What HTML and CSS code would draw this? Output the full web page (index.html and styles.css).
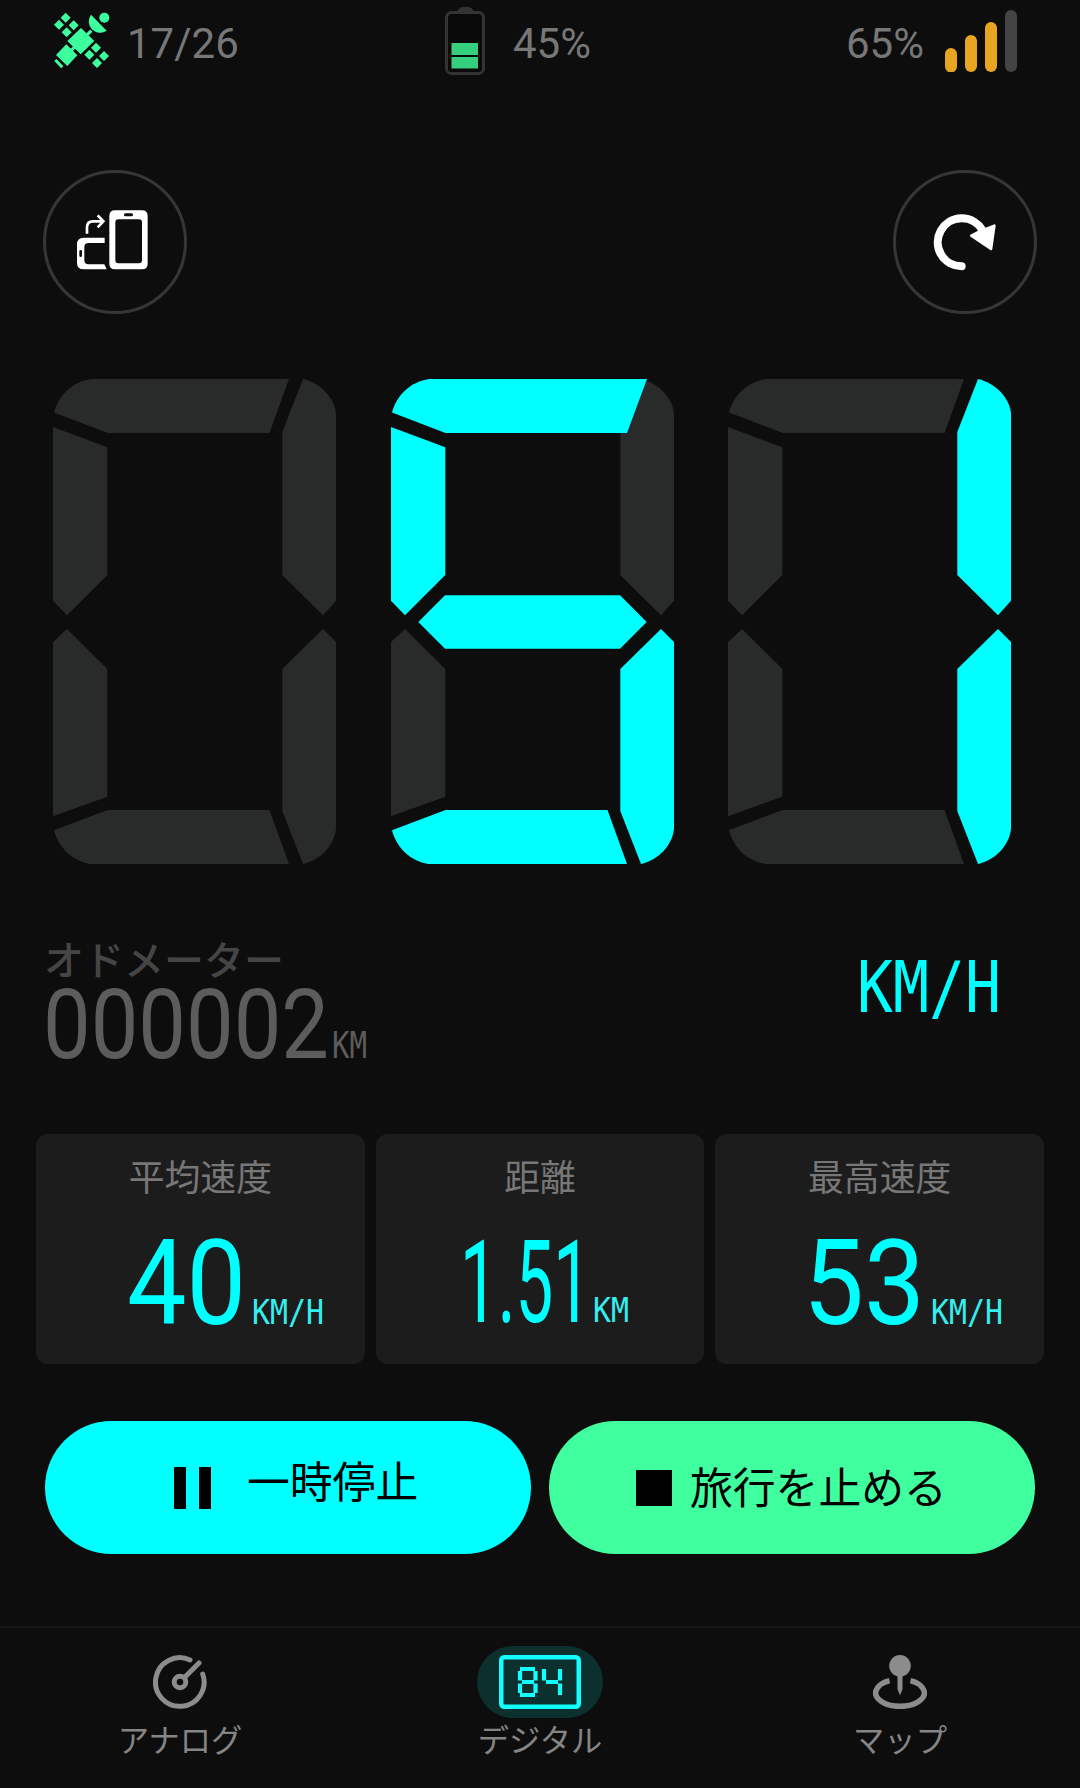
FILE: index.html
```html
<!DOCTYPE html>
<html lang="ja">
<head>
  <meta charset="UTF-8">
  <meta name="viewport" content="width=device-width, initial-scale=1.0">
  <title>デジタル</title>
  <link rel="stylesheet" href="styles.css">
</head>
<body>

  <!-- Segment shapes shared by the speed digits -->
  <svg class="defs" width="0" height="0">
    <defs>
      <path id="seg-a" d="M1 33.5C6 15 20 3 38 0H236L216.5 54H55Z"/>
      <path id="seg-a-lit" d="M1 33.5C6 15 20 3 38 0H256L236 54H54.5Z"/>
      <path id="seg-b" d="M250 0C267 4 281 18 283 34V221.7L270 236.3L229.3 196V53Z"/>
      <path id="seg-c" d="M270 250L283 263V450C281 467 267 481 250 485L229.3 432V290Z"/>
      <path id="seg-d" d="M1 451.3C6 470 20 482 37 485H236L216.5 431H54.5Z"/>
      <path id="seg-e" d="M14 250L54.3 290V417.7L0 437.3V263Z"/>
      <path id="seg-f" d="M0 48L54.3 68.3V196L14 236.3L0 221.7Z"/>
      <path id="seg-g" d="M54 216.3H229L255.7 243L229 269.7H54L27.3 243Z"/>
    </defs>
  </svg>

  <header class="status-bar">
    <div class="status satellites">
      <svg width="62" height="62" viewBox="60 30 186 186" fill="#3eff9e">
        <path d="M107 38l15 15-15 15-15-15zM87 59l15 15-15 15-15-15zM131 61l15 15-15 15-15-15zM110 82l15 15-15 15-15-15z"/>
        <path d="M198 128l15 15-15 15-15-15zM178 149l15 15-15 15-15-15zM222 153l15 15-15 15-15-15zM201 174l15 15-15 15-15-15z"/>
        <path d="M153 84L193 123L152 163L112 123ZM109 133L142 166L112 198L78 165Z"/>
        <path d="M183 44L230 92A34 34 0 0 1 183 44Z"/>
        <circle cx="223" cy="53" r="15"/>
        <path d="M184 92L166 110M138 137L120 155M76 180L97 202" stroke="#3eff9e" stroke-width="9"/>
      </svg>
      <span>17/26</span>
    </div>
    <div class="status battery">
      <svg width="42" height="70" viewBox="0 0 42 70">
        <path d="M12 5Q14 0 18 0H23Q27 0 29 5Z" fill="#333"/>
        <rect x="1.5" y="5.500" width="37" height="61" rx="5" fill="#0a0a0a" stroke="#333" stroke-width="3"/>
        <path d="M6.500 36H33V48H6.500ZM6.500 50H33V61.500H6.500Z" fill="#35cf7d"/>
      </svg>
      <span>45%</span>
    </div>
    <div class="status signal">
      <span>65%</span>
      <svg width="72" height="62" viewBox="0 0 72 62">
        <rect x="0" y="38" width="12" height="24.5" rx="6" fill="#e8a522"/>
        <rect x="20" y="25" width="12" height="37" rx="6" fill="#e8a522"/>
        <rect x="40" y="12" width="12" height="50" rx="6" fill="#e8a522"/>
        <rect x="60" y="0" width="12" height="62" rx="6" fill="#444"/>
      </svg>
    </div>
  </header>

  <div class="tools">
    <button class="round-btn" aria-label="rotate">
      <svg viewBox="49 38 414 414">
        <path fill="#fff" fill-rule="evenodd" d="M256 150H337Q354 150 354 167V310Q354 327 337 327H256Q239 327 239 310V167Q239 150 256 150ZM266 177Q257 177 257 186V300Q257 309 266 309H328Q337 309 337 300V186Q337 177 328 177ZM287 159Q283 159 283 163.500T287 168H306Q310 168 310 163.500T306 159Z"/>
        <path fill="#fff" fill-rule="evenodd" d="M225 232H162Q142 232 142 252V308Q142 327 162 327H231L224 312H177Q164 312 164 300V260Q164 248 177 248H225ZM153 269Q149 269 149 273V286Q149 290 153 290T157 286V273Q157 269 153 269Z"/>
        <path fill="none" stroke="#fff" stroke-width="8" d="M172 220V201Q172 183 190 183H220M204 165L221 183L204 201"/>
      </svg>
    </button>
    <button class="round-btn" aria-label="reset">
      <svg viewBox="49 38 414 414">
        <path fill="none" stroke="#fff" stroke-width="24" stroke-linecap="round" d="M246 318A72 72 0 1 1 308 209"/>
        <path fill="#fff" stroke="#fff" stroke-width="8" stroke-linejoin="round" d="M344 196L334 266L275 226L294 216Z"/>
      </svg>
    </button>
  </div>

  <div class="speed" role="img" aria-label="51">
    <svg class="digit" viewBox="0 0 283 485">
      <use href="#seg-a"/><use href="#seg-b"/><use href="#seg-c"/><use href="#seg-d"/><use href="#seg-e"/><use href="#seg-f"/>
    </svg>
    <svg class="digit" viewBox="0 0 283 485">
      <use href="#seg-b"/><use href="#seg-e"/>
      <g class="on"><use href="#seg-a-lit"/><use href="#seg-c"/><use href="#seg-d"/><use href="#seg-f"/><use href="#seg-g"/></g>
    </svg>
    <svg class="digit" viewBox="0 0 283 485">
      <use href="#seg-a"/><use href="#seg-d"/><use href="#seg-e"/><use href="#seg-f"/>
      <g class="on"><use href="#seg-b"/><use href="#seg-c"/></g>
    </svg>
  </div>

  <div class="info">
    <div class="odometer">
      <h2>オドメーター</h2>
      <svg class="lcd" width="330" height="72" viewBox="0 0 330 72">
        <text class="num" x="-2" y="71" font-size="96" textLength="286" lengthAdjust="spacingAndGlyphs">000002</text>
        <text class="unit" x="287" y="71" font-size="37" textLength="35" lengthAdjust="spacingAndGlyphs">KM</text>
      </svg>
    </div>
    <svg class="lcd speed-unit" width="144" height="60" viewBox="0 0 144 60">
      <text class="unit" x="0" y="56" font-size="71" textLength="144" lengthAdjust="spacingAndGlyphs">KM/H</text>
    </svg>
  </div>

  <div class="stats">
    <div class="card">
      <h3>平均速度</h3>
      <svg class="lcd" width="328" height="100" viewBox="0 0 328 100">
        <text class="num" x="91" y="94" font-size="119" textLength="119" lengthAdjust="spacingAndGlyphs">40</text>
        <text class="unit small" x="216" y="94" font-size="33" textLength="72" lengthAdjust="spacingAndGlyphs">KM/H</text>
      </svg>
    </div>
    <div class="card">
      <h3>距離</h3>
      <svg class="lcd" width="328" height="100" viewBox="0 0 328 100">
        <text class="num" x="84" y="92" font-size="115" textLength="131" lengthAdjust="spacingAndGlyphs">1.51</text>
        <text class="unit small" x="217" y="92" font-size="33" textLength="36" lengthAdjust="spacingAndGlyphs">KM</text>
      </svg>
    </div>
    <div class="card">
      <h3>最高速度</h3>
      <svg class="lcd" width="328" height="100" viewBox="0 0 328 100">
        <text class="num" x="88" y="94" font-size="119" textLength="122" lengthAdjust="spacingAndGlyphs">53</text>
        <text class="unit small" x="216" y="94" font-size="33" textLength="72" lengthAdjust="spacingAndGlyphs">KM/H</text>
      </svg>
    </div>
  </div>

  <div class="actions">
    <button class="btn btn-pause">
      <svg width="37" height="42" viewBox="0 0 37 42"><path d="M0 0H12V42H0ZM25 0H37V42H25Z"/></svg>
      <span>一時停止</span>
    </button>
    <button class="btn btn-stop">
      <svg width="36" height="36" viewBox="0 0 36 36"><path d="M0 0H36V36H0Z"/></svg>
      <span>旅行を止める</span>
    </button>
  </div>

  <nav class="tab-bar">
    <a class="tab">
      <span class="tab-icon">
        <svg width="54" height="54" viewBox="0 0 54 54" fill="none" stroke="#8c8c8c" stroke-width="5" stroke-linecap="round">
          <path d="M49.700 19A24.300 24.300 0 1 1 37 5M46 8L31.500 22.500"/>
          <circle cx="27" cy="27" r="5.800"/>
        </svg>
      </span>
      <span>アナログ</span>
    </a>
    <a class="tab active">
      <span class="tab-icon">
        <svg width="82" height="54" viewBox="0 0 82 54" fill="none" stroke="#1ff">
          <rect x="2.250" y="2.250" width="77.500" height="49.500" rx="3" stroke-width="4.500"/>
          <path stroke-width="4.200" d="M21 14H36M23 27H35M21 40H36M21 16V25.500M36.500 16V25.500M21 28.500V38M36.500 28.500V38M45 14V25.500M47 27H59M61 14V25.500M61 28.500V40"/>
        </svg>
      </span>
      <span>デジタル</span>
    </a>
    <a class="tab">
      <span class="tab-icon">
        <svg width="54" height="54" viewBox="0 0 54 54">
          <circle cx="27" cy="10.800" r="10.800" fill="#8c8c8c"/>
          <path fill="#8c8c8c" d="M24.500 18H29.500V34L27 40.500L24.500 34Z"/>
          <path fill="none" stroke="#8c8c8c" stroke-width="5.500" d="M16.500 25.700A24.300 13.500 0 1 0 37.500 25.700"/>
        </svg>
      </span>
      <span>マップ</span>
    </a>
  </nav>

</body>
</html>
```

FILE: styles.css
```css
* {
  box-sizing: border-box;
}

body {
  margin: 0;
  width: 1080px;
  height: 1788px;
  overflow: hidden;
  display: flex;
  flex-direction: column;
  background-color: #0d0d0d;
  color: #777;
  font-family: Roboto, 'Noto Sans CJK JP', sans-serif;
}

svg {
  display: block;
  flex-shrink: 0;
}

button {
  border: none;
  padding: 0;
  font-family: inherit;
  cursor: pointer;
}

h2,
h3 {
  margin: 0;
}

.defs {
  position: absolute;
}

/* Status bar */
.status-bar {
  display: flex;
  height: 86px;
  padding: 0 63px 0 50px;
  font-size: 42px;
  line-height: 87px;
}

.status {
  display: flex;
}

.satellites {
  width: 395px;
}

.satellites svg {
  margin: 10px 15px 0 0;
}

.battery svg {
  margin: 7px 26px 0 0;
}

.signal {
  margin-left: auto;
}

.signal svg {
  margin: 10px 0 0 21px;
}

/* Round buttons */
.tools {
  display: flex;
  justify-content: space-between;
  margin-top: 84px;
  padding: 0 43px;
}

.round-btn {
  width: 144px;
  height: 144px;
  border: 3px solid #363636;
  border-radius: 50%;
  background: none;
}

.round-btn svg {
  width: 138px;
  height: 138px;
}

/* Speed */
.speed {
  display: flex;
  gap: 54.5px;
  margin-top: 65px;
  padding-left: 53px;
}

.digit {
  width: 283px;
  height: 485px;
  fill: #292a2a;
}

.on {
  fill: #00ffff;
}

/* Odometer and unit */
.info {
  display: flex;
  justify-content: space-between;
  height: 270px;
  padding: 76px 79px 0 45px;
}

.odometer h2 {
  height: 47px;
  margin-left: -1px;
  font-size: 40px;
  font-weight: 500;
  line-height: 44px;
  color: #454545;
}

.lcd {
  overflow: visible;
  fill: #00ffff;
}

.odometer .lcd {
  fill: #5c5c5c;
}

.num {
  font-family: Roboto, sans-serif;
}

.unit {
  font-family: 'DejaVu Sans Mono', monospace;
}

.small {
  fill: #35eeee;
}

.speed-unit {
  margin-top: 16px;
}

/* Stats */
.stats {
  display: grid;
  grid-template-columns: repeat(3, 1fr);
  gap: 11px;
  padding: 0 36px;
}

.card {
  height: 230px;
  padding-top: 16px;
  border-radius: 12px;
  background-color: #1c1c1c;
}

.card h3 {
  height: 80px;
  font-size: 35.8px;
  font-weight: 400;
  line-height: 59px;
  text-align: center;
}

/* Buttons */
.actions {
  display: grid;
  grid-template-columns: 1fr 1fr;
  gap: 18px;
  margin-top: 57px;
  padding: 0 45px;
}

.btn {
  display: flex;
  align-items: center;
  height: 133px;
  border-radius: 67px;
  font-size: 42.8px;
  line-height: 60px;
  color: #000;
}

.btn-pause {
  gap: 36px;
  padding-left: 129px;
  background-color: #00ffff;
}

.btn-pause span {
  padding-bottom: 9px;
}

.btn-stop {
  gap: 18px;
  padding-left: 87px;
  background-color: #40ff9f;
}

.btn-stop span {
  padding-top: 3px;
}

/* Tab bar */
.tab-bar {
  display: grid;
  grid-template-columns: repeat(3, 1fr);
  height: 162px;
  margin-top: 72px;
  border-top: 2px solid #161616;
}

.tab {
  display: flex;
  flex-direction: column;
  align-items: center;
  padding-top: 18px;
  font-size: 31.3px;
  line-height: 47px;
  color: #858585;
}

.tab-icon {
  display: flex;
  align-items: center;
  justify-content: center;
  width: 126px;
  height: 72px;
  border-radius: 36px;
}

.active .tab-icon {
  background-color: #0c302e;
}
```
